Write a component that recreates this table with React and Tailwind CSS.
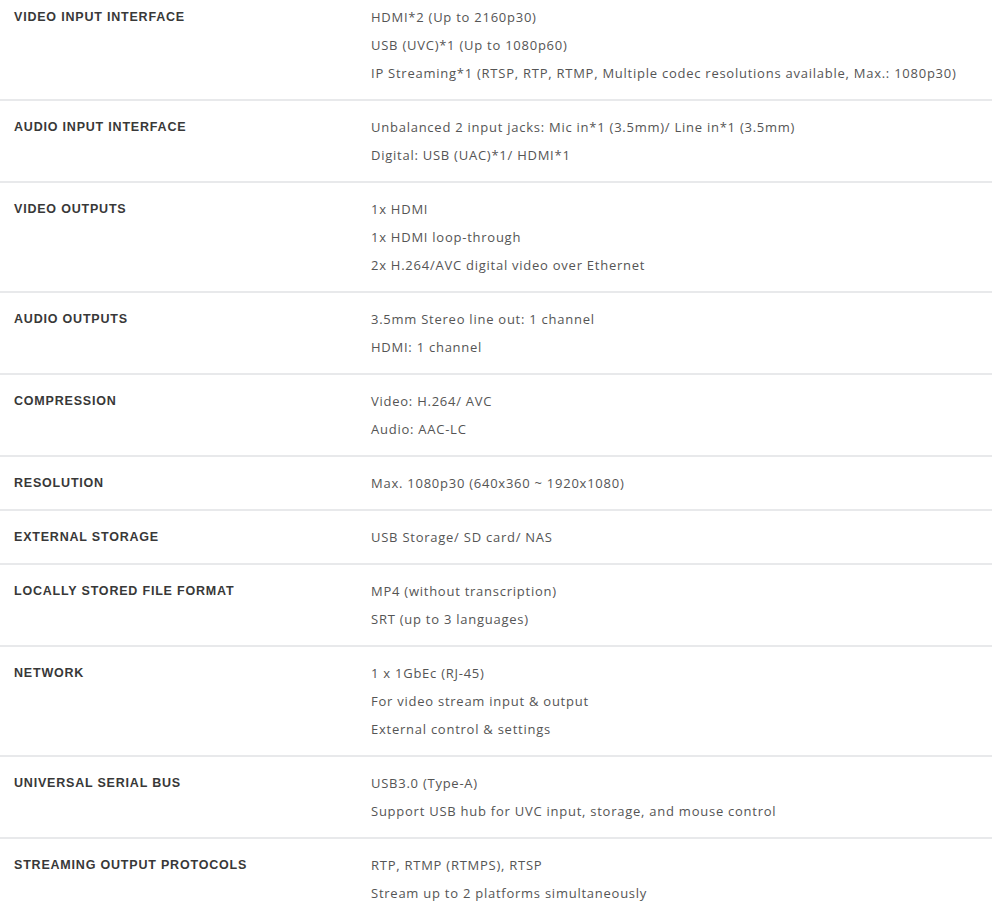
const specs = [
  {
    label: "VIDEO INPUT INTERFACE",
    values: [
      "HDMI*2 (Up to 2160p30)",
      "USB (UVC)*1 (Up to 1080p60)",
      "IP Streaming*1 (RTSP, RTP, RTMP, Multiple codec resolutions available, Max.: 1080p30)",
    ],
  },
  {
    label: "AUDIO INPUT INTERFACE",
    values: [
      "Unbalanced 2 input jacks: Mic in*1 (3.5mm)/ Line in*1 (3.5mm)",
      "Digital: USB (UAC)*1/ HDMI*1",
    ],
  },
  {
    label: "VIDEO OUTPUTS",
    values: ["1x HDMI", "1x HDMI loop-through", "2x H.264/AVC digital video over Ethernet"],
  },
  {
    label: "AUDIO OUTPUTS",
    values: ["3.5mm Stereo line out: 1 channel", "HDMI: 1 channel"],
  },
  { label: "COMPRESSION", values: ["Video: H.264/ AVC", "Audio: AAC-LC"] },
  { label: "RESOLUTION", values: ["Max. 1080p30 (640x360 ~ 1920x1080)"] },
  { label: "EXTERNAL STORAGE", values: ["USB Storage/ SD card/ NAS"] },
  {
    label: "LOCALLY STORED FILE FORMAT",
    values: ["MP4 (without transcription)", "SRT (up to 3 languages)"],
  },
  {
    label: "NETWORK",
    values: ["1 x 1GbEc (RJ-45)", "For video stream input & output", "External control & settings"],
  },
  {
    label: "UNIVERSAL SERIAL BUS",
    values: ["USB3.0 (Type-A)", "Support USB hub for UVC input, storage, and mouse control"],
  },
  {
    label: "STREAMING OUTPUT PROTOCOLS",
    values: ["RTP, RTMP (RTMPS), RTSP", "Stream up to 2 platforms simultaneously"],
  },
];

function SpecRow({ label, values, first }) {
  return (
    <div
      className={
        "grid grid-cols-[357px_1fr] px-[14px] pb-3 border-b-2 border-[#e8e9eb] last:border-b-0 " +
        (first ? "pt-[3px]" : "pt-3")
      }
    >
      <div className="font-['Liberation_Sans',Arial,sans-serif] font-bold text-[12.5px] tracking-[0.8px] leading-7 text-[#383838]">
        {label}
      </div>
      <div className="font-['Open_Sans',sans-serif] text-[13px] tracking-[0.75px] leading-7 text-[#555]">
        {values.map((v) => (
          <p key={v}>{v}</p>
        ))}
      </div>
    </div>
  );
}

export default function App() {
  return (
    <div className="w-[992px] h-[917px] bg-white overflow-hidden">
      {specs.map((s, i) => (
        <SpecRow key={s.label} label={s.label} values={s.values} first={i === 0} />
      ))}
    </div>
  );
}
